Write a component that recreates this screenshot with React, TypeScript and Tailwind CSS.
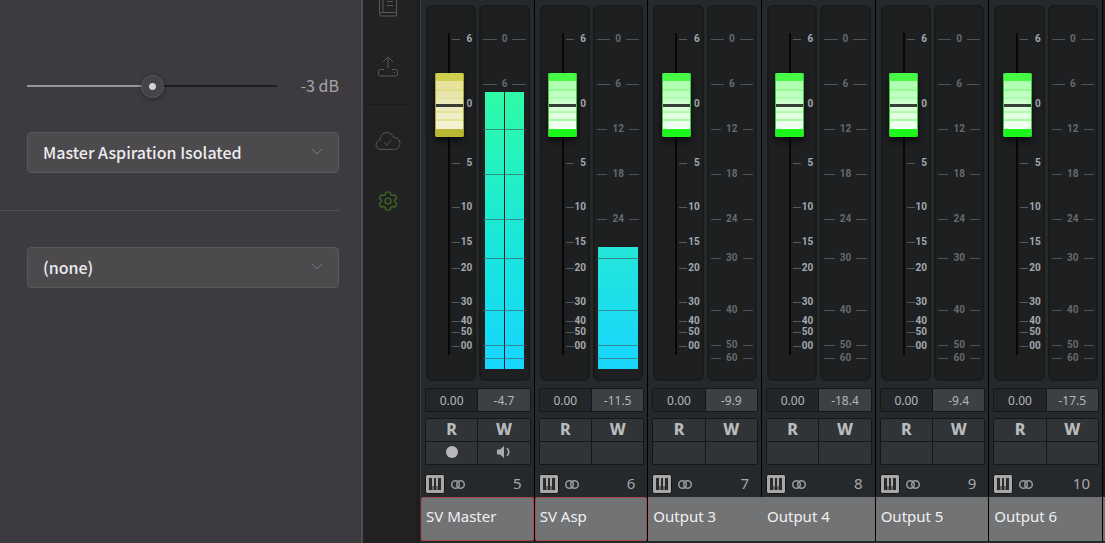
import React from "react";
import { HiOutlineCog6Tooth } from "react-icons/hi2";

type Channel = {
  name: string;
  index: number;
  peak: string;
  selected?: boolean;
  master?: boolean;
  joined?: boolean;
  meter?: "stereo" | "mono";
};

const channels: Channel[] = [
  { name: "SV Master", index: 5, peak: "-4.7", selected: true, master: true, meter: "stereo" },
  { name: "SV Asp", index: 6, peak: "-11.5", selected: true, meter: "mono" },
  { name: "Output 3", index: 7, peak: "-9.9", joined: true },
  { name: "Output 4", index: 8, peak: "-18.4" },
  { name: "Output 5", index: 9, peak: "-9.4" },
  { name: "Output 6", index: 10, peak: "-17.5" },
];

// the scales are not linear, so every mark carries its own gap
const faderMarks = [
  { label: "6", gap: "mt-px" },
  { label: "0", gap: "mt-[55px]" },
  { label: "5", gap: "mt-[49px]" },
  { label: "10", gap: "mt-[34px]" },
  { label: "15", gap: "mt-[25px]" },
  { label: "20", gap: "mt-4" },
  { label: "30", gap: "mt-6" },
  { label: "40", gap: "mt-[9px]" },
  { label: "50", gap: "mt-px" },
  { label: "00", gap: "mt-1" },
];

const meterMarks = [
  { label: "0", gap: "mt-px" },
  { label: "6", gap: "mt-[35px]" },
  { label: "12", gap: "mt-[35px]" },
  { label: "18", gap: "mt-[35px]" },
  { label: "24", gap: "mt-[35px]" },
  { label: "30", gap: "mt-[29px]" },
  { label: "40", gap: "mt-[42px]" },
  { label: "50", gap: "mt-[25px]" },
  { label: "60", gap: "mt-[3px]" },
];

function SelectBox({ label, options }: { label: string; options: string[] }) {
  return (
    <div className="relative">
      <select
        aria-label={label}
        className="block h-[41px] w-full appearance-none rounded border border-[#5a585b] bg-[#4c4a4c] pr-10 pb-0.5 pl-[15px] text-base font-medium text-[#ececf0]"
      >
        {options.map((o) => (
          <option key={o}>{o}</option>
        ))}
      </select>
      <svg
        className="pointer-events-none absolute top-4 right-4 h-2 w-3"
        viewBox="0 0 12 8"
        fill="none"
        stroke="#7b797d"
      >
        <path d="M1 1l5 5 5-5" />
      </svg>
    </div>
  );
}

function SettingsPanel() {
  return (
    <section className="w-[361px] shrink-0 bg-[#3e3b40] pt-[70px] pr-[22px] font-['Noto_Sans_CJK_SC','Noto_Sans',sans-serif]">
      <div className="flex h-8 items-center justify-between pl-[27px]">
        <input
          type="range"
          aria-label="Gain"
          min={-6}
          max={0}
          defaultValue={-3}
          className="h-6 w-[250px] appearance-none bg-[linear-gradient(to_right,#98959d_50%,#1f1c21_50%)] bg-[length:100%_2px] bg-center bg-no-repeat [&::-webkit-slider-thumb]:h-[23px] [&::-webkit-slider-thumb]:w-[23px] [&::-webkit-slider-thumb]:appearance-none [&::-webkit-slider-thumb]:rounded-full [&::-webkit-slider-thumb]:border [&::-webkit-slider-thumb]:border-[#5b585d] [&::-webkit-slider-thumb]:bg-[radial-gradient(circle,#d2cfdb_3px,#454347_4px)] [&::-webkit-slider-thumb]:shadow-[0_1px_5px_#00000066]"
        />
        <output className="pb-0.5 text-base text-[#a6a3ab]">-3 dB</output>
      </div>
      <div className="mt-[30px] pl-[27px]">
        <SelectBox label="Output" options={["Master Aspiration Isolated", "Master"]} />
      </div>
      <hr className="mt-[37px] border-[#545156]" />
      <div className="mt-9 pl-[27px]">
        <SelectBox label="Aspiration output" options={["(none)", "Master"]} />
      </div>
    </section>
  );
}

function SideNav() {
  return (
    <nav className="flex w-[59px] shrink-0 flex-col items-center border-r-4 border-l-2 border-r-[#1e1e20] border-l-[#4e4c50] bg-[#222224] pr-1 text-[#58585a]">
      <button aria-label="Library">
        <svg className="h-[17px] w-5" viewBox="0 3 20 17" fill="none" stroke="currentColor">
          <path d="M18.500 15.500V1.500H4Q1.500 1.500 1.500 4V17Q1.500 19 3.500 19H18.500V15.500H3.500Q1.500 15.500 1.500 17.500M5 1.500V15.500M9 4.500H15M9 8.500H15" />
        </svg>
      </button>
      <button aria-label="Export" className="mt-[39px]">
        <svg className="h-[22px] w-[22px]" viewBox="0 0 22 22" fill="none" stroke="currentColor">
          <path d="M11 12V1M6 6l5-5 5 5" />
          <path d="M7 13.500H3.500a2 2 0 0 0-2 2V18a2 2 0 0 0 2 2H18.500a2 2 0 0 0 2-2V15.500a2 2 0 0 0-2-2H15" />
          <path d="M16.500 16.500h1.500" />
        </svg>
      </button>
      <hr className="mt-[26px] w-[46px] border-[#1c1c1e]" />
      <button aria-label="Cloud sync" className="mt-[26px]">
        <svg className="h-5 w-[26px]" viewBox="0 0 26 20" fill="none" stroke="currentColor">
          <path d="M6.200 18.400C3.200 18.400 1 16.400 1 13.700C1 11.200 2.900 9.200 5.400 8.800C5.200 4.700 8 1.600 12 1.600C15.200 1.600 17.400 3.600 18.200 6.400C22 6.200 25 8.800 25 12.300C25 15.900 22.200 18.400 18.800 18.400Z" />
          <path d="M9.300 11.300l2.500 2.500L16.700 9" />
        </svg>
      </button>
      <button aria-label="Settings" className="mt-[38px] text-[#42701f]">
        <HiOutlineCog6Tooth size={24} strokeWidth={1.2} />
      </button>
    </nav>
  );
}

function Fader({ name, master }: { name: string; master?: boolean }) {
  return (
    <div className="grid h-[376px] rounded-md border-2 border-[#191a1a] bg-[#1e1f21] pt-[26px]">
      <input
        type="range"
        aria-label={`${name} volume`}
        min={0}
        max={1000}
        defaultValue={845}
        className={`z-10 col-start-1 row-start-1 ml-1.5 h-[322px] w-[30px] appearance-none bg-[linear-gradient(#070708,#070708)] bg-[length:2px_100%] bg-center bg-no-repeat [direction:rtl] [writing-mode:vertical-lr] [&::-webkit-slider-thumb]:h-16 [&::-webkit-slider-thumb]:w-[29px] [&::-webkit-slider-thumb]:appearance-none [&::-webkit-slider-thumb]:rounded-xs ${
          master
            ? "[&::-webkit-slider-thumb]:bg-[linear-gradient(#d0cf50_8px,#e6e49c_8px_16px,#e0de84_16px_18px,#e8e6ac_18px_24px,#e3e19c_24px_26px,#ebe9b8_26px_31px,#3a3a34_31px_34px,#eeecc0_34px_38px,#e6e49a_38px_40px,#f0eec8_40px_46px,#e6e492_46px_48px,#f3f1d2_48px_56px,#b9b832_56px)] [&::-webkit-slider-thumb]:shadow-[0_4px_6px_#00000099,inset_1px_0_#a9a83a,inset_-1px_0_#a9a83a]"
            : "[&::-webkit-slider-thumb]:bg-[linear-gradient(#46fb46_8px,#b2ffb2_8px_16px,#94fc94_16px_18px,#bfffbf_18px_24px,#abfcab_24px_26px,#ccffcc_26px_31px,#364036_31px_34px,#dcffdc_34px_38px,#b0fcb0_38px_40px,#e2ffe2_40px_46px,#a4fca4_46px_48px,#effff0_48px_56px,#1cf81c_56px)] [&::-webkit-slider-thumb]:shadow-[0_4px_6px_#00000099,inset_1px_0_#3fc93f,inset_-1px_0_#3fc93f]"
        }`}
      />
      <ul className="col-start-1 row-start-1 pr-0.5 pl-6 font-['Roboto',sans-serif]">
        {faderMarks.map((m) => (
          <li
            key={m.label}
            className={`flex h-2.5 items-center justify-between text-[10px] leading-[10px] font-bold text-[#a3a9ae] ${m.gap}`}
          >
            <span className="mt-px h-px w-2 bg-[#54585b]" />
            {m.label}
          </li>
        ))}
      </ul>
    </div>
  );
}

function Meter({ meter }: { meter?: "stereo" | "mono" }) {
  // number of marks that stay visible above the level bar
  const open = meter === "stereo" ? 2 : meter === "mono" ? 5 : meterMarks.length;
  return (
    <div className="relative h-[376px] rounded-md border-2 border-[#191a1a] bg-[#1e1f21] px-0.5 pt-[26px]">
      {meter === "stereo" && (
        <div className="absolute inset-x-1 bottom-2.5 flex h-[277px] gap-px">
          <div className="flex-1 bg-linear-to-b from-[#2ffaa6] to-[#18d5ff]" />
          <div className="flex-1 bg-linear-to-b from-[#2ffaa6] to-[#18d5ff]" />
        </div>
      )}
      {meter === "mono" && (
        <div className="absolute inset-x-[3px] bottom-2.5 h-[122px] bg-linear-to-b from-[#25e6d9] to-[#18d5ff]" />
      )}
      <ul className="relative font-['Roboto',sans-serif]">
        {meterMarks.map((m, i) =>
          i < open ? (
            <li
              key={m.label}
              className={`flex h-2.5 items-center gap-[5px] text-[10px] leading-[10px] font-bold text-[#666a6d] ${m.gap}`}
            >
              <span className="h-px flex-1 bg-[#505355]" />
              {m.label}
              <span className="h-px flex-1 bg-[#505355]" />
            </li>
          ) : (
            <li key={m.label} className={`flex h-2.5 items-center ${m.gap}`}>
              <span className="h-px flex-1 bg-[#3f6468]/70" />
            </li>
          )
        )}
      </ul>
    </div>
  );
}

function KeysIcon() {
  return (
    <svg className="h-5 w-5" viewBox="0 0 20 20">
      <rect x="0.500" y="0.500" width="19" height="19" rx="2" fill="#a9a8a6" stroke="#141516" />
      <rect x="4" y="4" width="12" height="12" fill="#2a2b2c" />
      <path d="M7 4h2v8H7zM11 4h2v8h-2zM7.500 12h1v4h-1zM11.500 12h1v4h-1z" fill="#a9a8a6" />
    </svg>
  );
}

function ChannelStrip({ channel }: { channel: Channel }) {
  const cell = "flex h-[22px] items-center justify-center bg-[#303437] pb-0.5";
  return (
    <section className="flex min-w-0 flex-col border-r border-black bg-[#25292c]">
      <div className="grid grid-cols-2 gap-[3px] pt-[5px] pr-1 pl-[5px]">
        <Fader name={channel.name} master={channel.master} />
        <Meter meter={channel.meter} />
      </div>

      <div className="mt-[7px] mr-[3px] ml-1 grid grid-cols-2 gap-px rounded-xs border border-[#151718] bg-[#151718] text-center text-xs leading-5 text-[#b4b6b8]">
        <span className="bg-[#232629] pt-0.5">0.00</span>
        <span className="bg-[#3c4043] pt-0.5">{channel.peak}</span>
      </div>

      <div className="mt-1.5 mr-[3px] ml-1 grid grid-cols-2 gap-px rounded-xs border border-[#151718] bg-[#151718] text-base font-extrabold text-[#b9bbbc]">
        <button className={cell}>R</button>
        <button className={cell}>W</button>
        <button aria-label="Record" className={cell}>
          {channel.master && <span className="h-3 w-3 rounded-full bg-[#b8b8ba]" />}
        </button>
        <button aria-label="Monitor" className={cell}>
          {channel.master && (
            <svg className="h-3 w-3.5" viewBox="0 0 14 12">
              <path d="M0 3.500h3L7 0v12L3 8.500H0z" fill="#a9abad" />
              <path d="M10 2q3.500 4 0 8" fill="none" stroke="#a9abad" strokeWidth="1.500" />
            </svg>
          )}
        </button>
      </div>

      <div className="mt-[9px] flex items-center pr-3 pl-1">
        <KeysIcon />
        <svg className="ml-[5px] h-3 w-4" viewBox="0 0 16 12" fill="none" stroke="#9b9d9f" strokeWidth="1.500">
          <circle cx="5.500" cy="6.500" r="3.800" />
          <circle cx="10.500" cy="6.500" r="3.800" />
        </svg>
        <span className="ml-auto pb-0.5 text-[15px] leading-[18px] text-[#a5a7a9]">{channel.index}</span>
      </div>

      <h2
        className={`mt-[3px] h-11 border bg-[#727375] pl-1 text-[15px] leading-9 text-[#f0f0f0] ${
          channel.selected ? "rounded-xs border-[#a84a4c]" : "border-[#727375]"
        } ${channel.joined ? "-mr-px" : ""}`}
      >
        {channel.name}
      </h2>
    </section>
  );
}

export default function App() {
  return (
    <main className="flex min-h-screen bg-[#25292c]">
      <SettingsPanel />
      <SideNav />
      <div className="flex min-w-0 flex-1 items-start border-l border-[#37393b] font-['Noto_Sans','Open_Sans',sans-serif]">
        <div className="grid min-w-0 flex-1 grid-cols-6">
          {channels.map((c) => (
            <ChannelStrip key={c.index} channel={c} />
          ))}
        </div>
        {/* start of the next channel */}
        <div className="w-0.5 border-b-44 border-[#727375] bg-[#1c1f21] pt-[497px]" />
      </div>
    </main>
  );
}
